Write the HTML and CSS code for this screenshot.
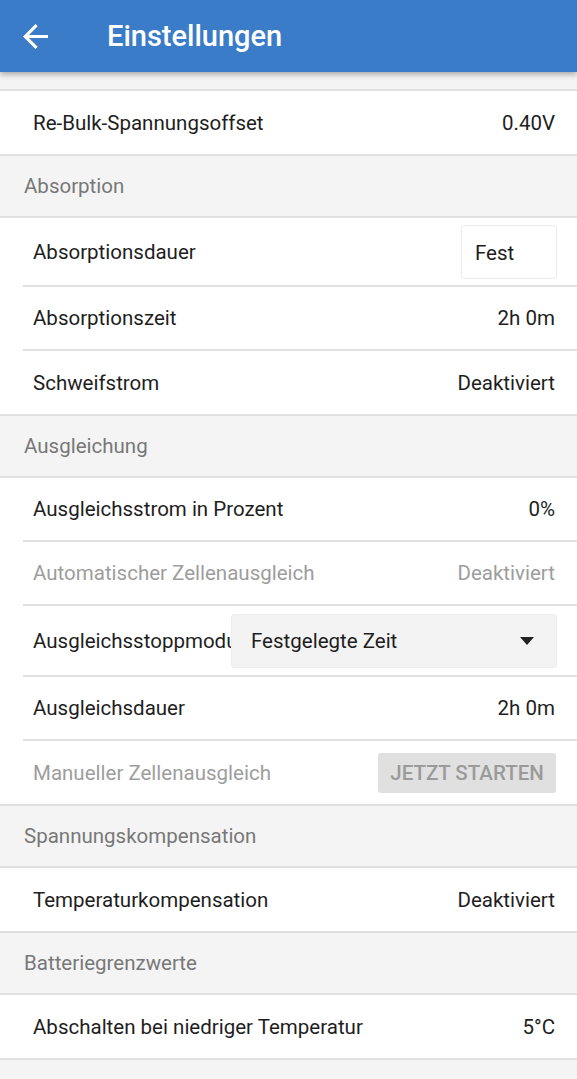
FILE: index.html
```html
<!doctype html>
<html lang="de">
<head>
    <meta charset="UTF-8">
    <meta name="viewport" content="width=device-width, initial-scale=1.0">
    <title>Einstellungen</title>
    <link rel="stylesheet" href="styles.css">
</head>
<body>
<div class="topbar">
    <svg class="back" viewBox="4 4 16 16" width="25" height="25">
        <path d="M20 11H7.83l5.59-5.59L12 4l-8 8 8 8 1.41-1.41L7.83 13H20v-2z" fill="#fff"/>
    </svg>
    <div class="title">Einstellungen</div>
</div>
<div class="page">
    <div class="group first">
        <div class="row"><span class="label">Re-Bulk-Spannungsoffset</span><span class="value">0.40V</span></div>
    </div>

    <div class="section">Absorption</div>
    <div class="group">
        <div class="row tall">
            <span class="label">Absorptionsdauer</span>
            <span class="pick">Fest</span>
        </div>
        <div class="row"><span class="label">Absorptionszeit</span><span class="value">2h 0m</span></div>
        <div class="row"><span class="label">Schweifstrom</span><span class="value">Deaktiviert</span></div>
    </div>

    <div class="section">Ausgleichung</div>
    <div class="group">
        <div class="row"><span class="label">Ausgleichsstrom in Prozent</span><span class="value">0%</span></div>
        <div class="row off"><span class="label">Automatischer Zellenausgleich</span><span class="value">Deaktiviert</span></div>
        <div class="row taller">
            <span class="label">Ausgleichsstoppmodus</span>
            <div class="select">
                <span>Festgelegte Zeit</span>
                <svg width="14" height="8" viewBox="0 0 14 8"><path d="M0 0h14L7 8z" fill="#222"/></svg>
            </div>
        </div>
        <div class="row"><span class="label">Ausgleichsdauer</span><span class="value">2h 0m</span></div>
        <div class="row off">
            <span class="label">Manueller Zellenausgleich</span>
            <span class="btn">Jetzt starten</span>
        </div>
    </div>

    <div class="section">Spannungskompensation</div>
    <div class="group">
        <div class="row"><span class="label">Temperaturkompensation</span><span class="value">Deaktiviert</span></div>
    </div>

    <div class="section">Batteriegrenzwerte</div>
    <div class="group">
        <div class="row"><span class="label">Abschalten bei niedriger Temperatur</span><span class="value">5°C</span></div>
    </div>
</div>
</body>
</html>
```

FILE: styles.css
```css
body{ margin: 0; background: #f4f4f4; font-family: Roboto, "Noto Sans", sans-serif; color: #1e1e1e; }
.topbar{ position: relative; z-index: 2; display: flex; align-items: center; height: 72px; background: #3a7cc7; box-shadow: 0 2px 6px rgba(0,0,0,.35); }
.back{ margin-left: 23px; }
.title{ margin-left: 59px; color: #fff; font-size: 29px; font-weight: 500; }
.page{ padding-top: 17px; }
.group{ background: #fff; border-bottom: 2px solid #e0e0e0; }
.group.first{ border-top: 2px solid #e0e0e0; }
.row{ display: flex; align-items: center; justify-content: space-between; height: 62px; margin-left: 23px; padding: 0 22px 0 10px; border-bottom: 2px solid #e0e0e0; font-size: 20.5px; }
.row:last-child{ border-bottom: 0; height: 63px; }
.row.tall{ height: 67px; padding-right: 20px; }
.row.taller{ height: 69px; padding-right: 20px; }
.label{ white-space: nowrap; overflow: hidden; flex: 1; min-width: 0; }
.value{ white-space: nowrap; }
.off{ color: #9d9d9d; }
.section{ height: 60px; line-height: 60px; padding-left: 24px; color: #787878; font-size: 20.5px; border-bottom: 2px solid #e0e0e0; }
.pick{ box-sizing: border-box; width: 96px; height: 54px; line-height: 54px; padding-left: 13px; border: 1px solid #ececec; border-radius: 3px; }
.select{ box-sizing: border-box; display: flex; align-items: center; justify-content: space-between; width: 326px; height: 54px; padding: 0 22px 0 19px; background: #f3f3f3; border: 1px solid #ececec; border-radius: 3px; }
.btn{ box-sizing: border-box; width: 178px; height: 40px; line-height: 40px; text-align: center; background: #e0e0e0; color: #9a9a9a; border-radius: 3px; font-size: 20.5px; font-weight: 500; text-transform: uppercase; margin-right: -1px; }
```
